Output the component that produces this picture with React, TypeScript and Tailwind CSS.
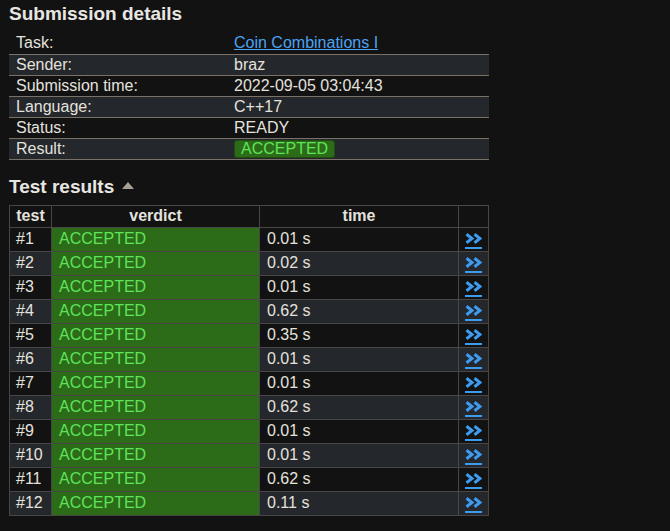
import { Fragment } from "react";

const details = [
    { label: "Task:", value: "Coin Combinations I", kind: "link" },
    { label: "Sender:", value: "braz" },
    { label: "Submission time:", value: "2022-09-05 03:04:43" },
    { label: "Language:", value: "C++17" },
    { label: "Status:", value: "READY" },
    { label: "Result:", value: "ACCEPTED", kind: "badge" },
];

const tests = [
    "0.01 s",
    "0.02 s",
    "0.01 s",
    "0.62 s",
    "0.35 s",
    "0.01 s",
    "0.01 s",
    "0.62 s",
    "0.01 s",
    "0.01 s",
    "0.62 s",
    "0.11 s",
];

function DoubleChevron() {
    return (
        <svg width="17" height="11" viewBox="0 0 17 11" fill="none">
            <polyline
                points="1.5,1.2 7,5.5 1.5,9.8"
                stroke="#3d9cf0"
                strokeWidth="3"
            />
            <polyline
                points="9.5,1.2 15,5.5 9.5,9.8"
                stroke="#3d9cf0"
                strokeWidth="3"
            />
        </svg>
    );
}

export default function App() {
    return (
        <div
            className="min-h-[531px] w-[670px] bg-[#121212] px-[9px] pt-[3px] text-[16px] text-[#e4e2de]"
            style={{ fontFamily: '"Liberation Sans", Arial, sans-serif' }}
        >
            <h2 className="text-[19px] font-bold leading-[22px] text-[#e8e6e3]">
                Submission details
            </h2>

            <table className="mt-[8px] w-[480px] border-collapse">
                <tbody>
                    {details.map((row, i) => (
                        <tr
                            key={row.label}
                            className={`h-[21px] border-b border-[#7a7266] ${
                                i % 2 === 1 ? "bg-[#24272b]" : ""
                            }`}
                        >
                            <td className="w-[225px] p-0 pl-[7px] leading-[20px]">
                                {row.label}
                            </td>
                            <td className="p-0 leading-[20px]">
                                {row.kind === "link" ? (
                                    <a className="text-[#4ba3f2] underline">
                                        {row.value}
                                    </a>
                                ) : row.kind === "badge" ? (
                                    <span className="inline-block rounded-[3px] border border-[#1f4f10] bg-[#2c6b18] px-[6px] leading-[16px] text-[#5fe35a]">
                                        {row.value}
                                    </span>
                                ) : (
                                    row.value
                                )}
                            </td>
                        </tr>
                    ))}
                </tbody>
            </table>

            <h2 className="mt-[16px] flex items-center text-[19px] font-bold leading-[22px] text-[#e8e6e3]">
                Test results
                <span className="ml-[8px] mt-[-2px] h-0 w-0 border-x-[6px] border-b-[7px] border-x-transparent border-b-[#a8a093]" />
            </h2>

            <table className="mt-[7px] w-[480px] border-collapse border border-[#474747]">
                <thead>
                    <tr className="h-[22px]">
                        <th className="w-[42px] border border-[#474747] p-0 font-bold leading-[20px]">
                            test
                        </th>
                        <th className="w-[208px] border border-[#474747] p-0 font-bold leading-[20px]">
                            verdict
                        </th>
                        <th className="w-[199px] border border-[#474747] p-0 font-bold leading-[20px]">
                            time
                        </th>
                        <th className="border border-[#474747] p-0" />
                    </tr>
                </thead>
                <tbody>
                    {tests.map((time, i) => (
                        <Fragment key={i}>
                            <tr
                                className={`h-[24px] ${
                                    i % 2 === 1 ? "bg-[#24272b]" : ""
                                }`}
                            >
                                <td className="border border-[#474747] p-0 pl-[6px] leading-[22px]">
                                    #{i + 1}
                                </td>
                                <td className="border border-[#474747] bg-[#2c6b18] p-0 pl-[7px] leading-[22px] text-[#5fe35a]">
                                    ACCEPTED
                                </td>
                                <td className="border border-[#474747] p-0 pl-[7px] leading-[22px]">
                                    {time}
                                </td>
                                <td className="border border-[#474747] p-0">
                                    <a className="mx-auto mt-[3px] flex w-[17px] flex-col items-center border-b-2 border-[#3d9cf0] pb-[3px]">
                                        <DoubleChevron />
                                    </a>
                                </td>
                            </tr>
                        </Fragment>
                    ))}
                </tbody>
            </table>
        </div>
    );
}
